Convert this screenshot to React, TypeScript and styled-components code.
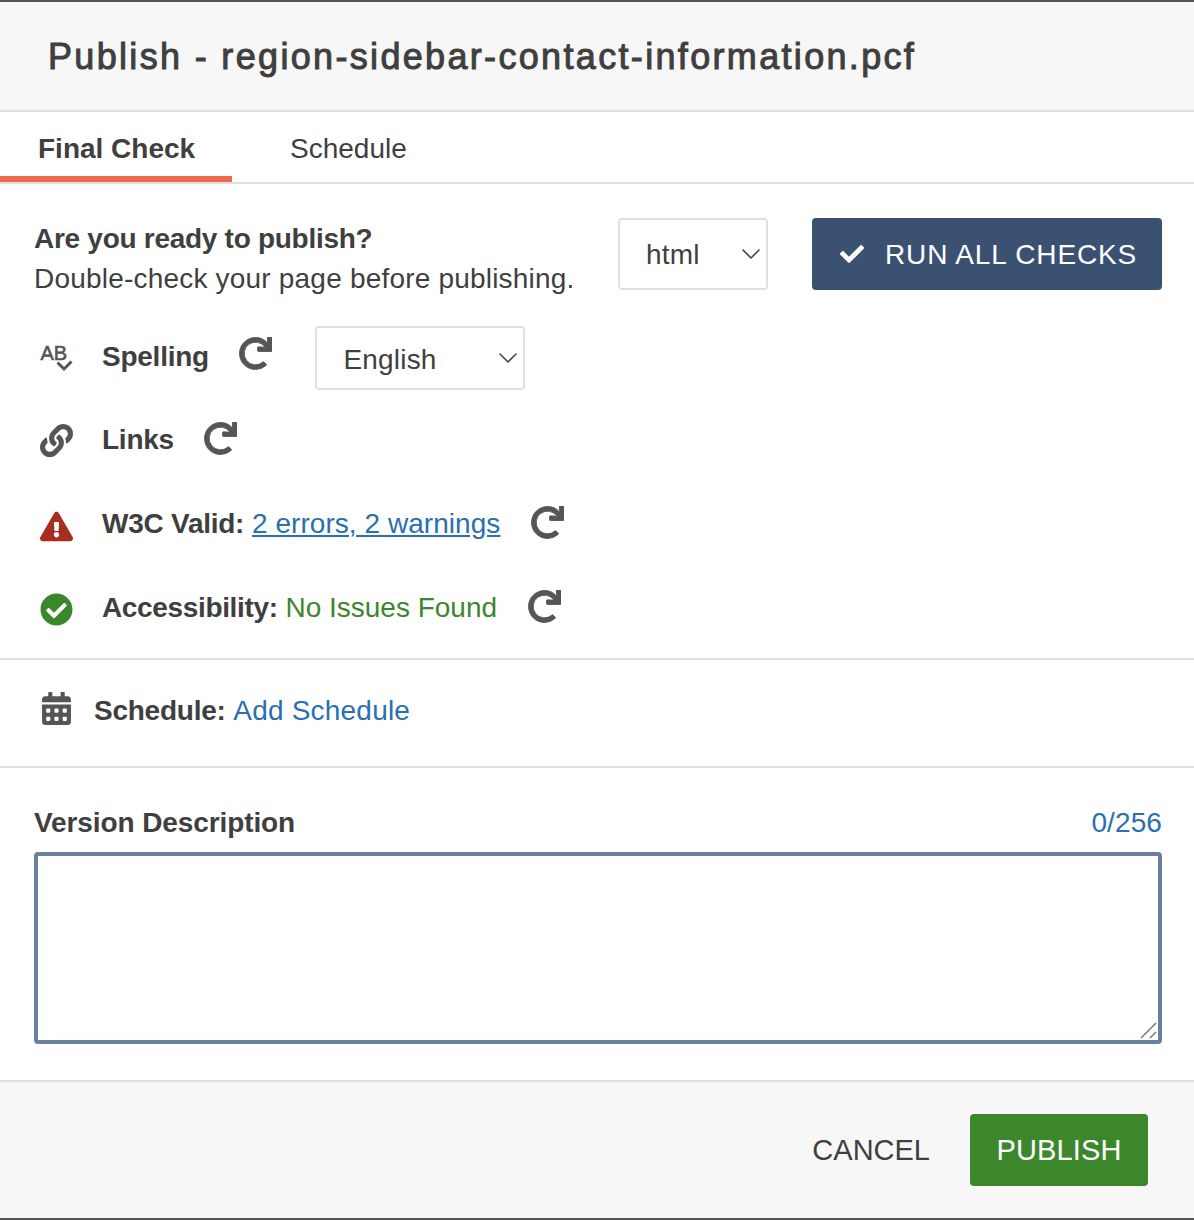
import React, { FC, ReactNode } from 'react'
import styled, { createGlobalStyle } from 'styled-components'
import {
  FaCalendarAlt,
  FaCheck,
  FaCheckCircle,
  FaExclamationTriangle,
  FaLink,
  FaRedo,
} from 'react-icons/fa'
import { LuChevronDown } from 'react-icons/lu'

const GlobalStyle = createGlobalStyle`
  html, body {
    margin: 0;
    padding: 0;
    background: #fff;
  }
  body {
    font-family: 'Liberation Sans', Arial, sans-serif;
    color: #3f3f3f;
  }
`

const Dialog = styled.div`
  width: 1194px;
  height: 1220px;
  box-sizing: border-box;
  border-top: 2px solid #555;
  border-bottom: 2px solid #555;
  display: flex;
  flex-direction: column;
  font-size: 28px;
`

const Header = styled.header`
  height: 110px;
  box-sizing: border-box;
  background: #f7f7f7;
  border-bottom: 2px solid #e0e0e0;
  display: flex;
  align-items: center;
  padding: 2px 48px 0;
`

const Title = styled.h1`
  margin: 0;
  font-size: 36px;
  font-weight: 400;
  letter-spacing: 2.33px;
  -webkit-text-stroke: 1px #3f3f3f;
  white-space: nowrap;
`

const Tabs = styled.nav`
  height: 72px;
  box-sizing: border-box;
  border-bottom: 2px solid #e0e0e0;
  display: flex;
`

const Tab = styled.div<{ $active?: boolean }>`
  height: 70px;
  box-sizing: border-box;
  width: ${(p) => (p.$active ? '232px' : 'auto')};
  padding: 0 ${(p) => (p.$active ? '38px' : '58px')};
  line-height: 74px;
  font-weight: ${(p) => (p.$active ? 700 : 400)};
  border-bottom: ${(p) => (p.$active ? '6px solid #ee6a4a' : 'none')};
  white-space: nowrap;
`

const Checks = styled.section`
  height: 476px;
  box-sizing: border-box;
  padding: 34px 32px 0 34px;
  border-bottom: 2px solid #e0e0e0;
`

const Intro = styled.div`
  display: flex;
  align-items: flex-start;
  height: 72px;
  margin-bottom: 36px;
`

const IntroText = styled.div`
  width: 584px;
  line-height: 40px;
  padding-top: 1px;
  letter-spacing: 0.2px;
`

const Strong = styled.strong<{ $spacing?: number }>`
  font-weight: 700;
  letter-spacing: ${(p) => p.$spacing ?? -0.25}px;
`

const SelectWrap = styled.div<{ $width: number; $height: number }>`
  position: relative;
  width: ${(p) => p.$width}px;
  height: ${(p) => p.$height}px;
  flex: none;
`

const Select = styled.select<{ $drop?: number }>`
  appearance: none;
  width: 100%;
  height: 100%;
  box-sizing: border-box;
  border: 2px solid #e0e0e0;
  border-radius: 4px;
  background: #fff;
  padding: ${(p) => p.$drop ?? 0}px 26px 0;
  font: inherit;
  letter-spacing: 0.2px;
  color: #3f3f3f;
`

const Chevron = styled(LuChevronDown)`
  position: absolute;
  right: 1px;
  top: 50%;
  width: 32px;
  height: 32px;
  margin-top: -16px;
  color: #444;
  stroke-width: 1.2;
  pointer-events: none;
`

const RunButton = styled.button`
  width: 350px;
  height: 72px;
  margin-left: 44px;
  flex: none;
  border: none;
  border-radius: 4px;
  background: #3b5172;
  color: #fff;
  font: inherit;
  letter-spacing: 0.85px;
  display: flex;
  align-items: center;
  padding: 2px 0 0 28px;
  gap: 21px;
  white-space: nowrap;

  svg {
    width: 24px;
    height: 24px;
    margin-top: -2px;
  }
`

const Row = styled.div<{ $height: number }>`
  height: ${(p) => p.$height}px;
  display: flex;
  align-items: center;
  padding-left: 6px;
`

const IconCell = styled.div<{ $color?: string; $shift?: number }>`
  width: 62px;
  flex: none;
  display: flex;
  align-items: center;
  margin-top: ${(p) => p.$shift ?? 0}px;
  color: ${(p) => p.$color || '#555'};
  svg {
    width: 33px;
    height: 33px;
  }
`

const Label = styled.div`
  white-space: nowrap;
`

const SpellLabel = styled(Label)`
  margin-bottom: 3px;
`

const Anchor = styled.a<{ $underline?: boolean }>`
  color: #2a6fb0;
  letter-spacing: ${(p) => (p.$underline ? 0.05 : 0.2)}px;
  text-decoration: ${(p) => (p.$underline ? 'underline' : 'none')};
`

const Passed = styled.span`
  color: #3c872b;
`

const Refresh = styled(FaRedo)<{ $lift?: number }>`
  width: 33px;
  height: 33px;
  margin-left: 30.5px;
  margin-top: ${(p) => p.$lift ?? -4}px;
  color: #555;
  stroke: #555;
  stroke-width: 14;
  flex: none;
`

const LangSelect = styled(SelectWrap)`
  margin-left: 43px;
`

const ScheduleRow = styled.div`
  height: 108px;
  box-sizing: border-box;
  border-bottom: 2px solid #e0e0e0;
  display: flex;
  align-items: center;
  padding: 0 0 4px 40px;

  ${IconCell} {
    width: 54px;
    margin-bottom: 6px;
  }
`

const Version = styled.section`
  flex: 1;
  box-sizing: border-box;
  padding: 35px 32px 0 34px;
`

const VersionHead = styled.div`
  display: flex;
  justify-content: space-between;
  align-items: center;
  height: 40px;
  margin-bottom: 9px;
`

const Counter = styled.span`
  color: #2a6fb0;
  letter-spacing: 0.1px;
`

const DescriptionWrap = styled.div`
  position: relative;
  width: 1128px;
  height: 192px;
`

const Description = styled.textarea`
  display: block;
  width: 100%;
  height: 100%;
  box-sizing: border-box;
  border: 4px solid #6b7f9e;
  border-radius: 4px;
  outline: none;
  resize: none;
  font: inherit;
`

const Grip = styled.svg`
  position: absolute;
  right: 4px;
  bottom: 4px;
  width: 18px;
  height: 18px;
  pointer-events: none;
`

const Footer = styled.footer`
  height: 138px;
  box-sizing: border-box;
  background: #f7f7f7;
  border-top: 2px solid #e0e0e0;
  display: flex;
  align-items: center;
  justify-content: flex-end;
  padding: 0 46px 0 0;
`

const CancelButton = styled.button`
  border: none;
  background: none;
  padding: 0;
  margin-right: 40px;
  font: inherit;
  color: #3f3f3f;
  font-size: 29px;
`

const PublishButton = styled.button`
  width: 178px;
  height: 72px;
  border: none;
  border-radius: 4px;
  background: #3c872b;
  color: #fff;
  font: inherit;
  font-size: 29px;
  letter-spacing: 0.15px;
`

const SpellIconText = styled.text`
  font-family: 'Liberation Sans', Arial, sans-serif;
  font-size: 20px;
  fill: #555;
  stroke: #555;
  stroke-width: 0.6;
`

const SpellIcon: FC = () => (
  <svg viewBox='0 0 33 33' aria-hidden='true'>
    <SpellIconText x='0.5' y='18'>
      AB
    </SpellIconText>
    <polyline points='17.5,20.5 24,27 31.5,19.5' fill='none' stroke='#555' strokeWidth='3' />
  </svg>
)

interface CheckRowProps {
  icon: ReactNode
  color?: string
  shift?: number
  height: number
  children: ReactNode
}

const CheckRow: FC<CheckRowProps> = ({ icon, color, shift, height, children }) => (
  <Row $height={height}>
    <IconCell $color={color} $shift={shift}>
      {icon}
    </IconCell>
    <Label>{children}</Label>
    <Refresh />
  </Row>
)

const App: FC = () => {
  return (
    <Dialog>
      <GlobalStyle />
      <Header>
        <Title>Publish - region-sidebar-contact-information.pcf</Title>
      </Header>
      <Tabs>
        <Tab $active>Final Check</Tab>
        <Tab>Schedule</Tab>
      </Tabs>
      <Checks>
        <Intro>
          <IntroText>
            <Strong $spacing={-0.28}>Are you ready to publish?</Strong>
            <br />
            Double-check your page before publishing.
          </IntroText>
          <SelectWrap $width={150} $height={72}>
            <Select defaultValue='html'>
              <option>html</option>
            </Select>
            <Chevron />
          </SelectWrap>
          <RunButton>
            <FaCheck />
            RUN ALL CHECKS
          </RunButton>
        </Intro>
        <Row $height={64}>
          <IconCell>
            <SpellIcon />
          </IconCell>
          <SpellLabel>
            <Strong>Spelling</Strong>
          </SpellLabel>
          <Refresh $lift={-10} />
          <LangSelect $width={210} $height={64}>
            <Select defaultValue='English' $drop={2}>
              <option>English</option>
            </Select>
            <Chevron />
          </LangSelect>
        </Row>
        <CheckRow icon={<FaLink />} height={100}>
          <Strong>Links</Strong>
        </CheckRow>
        <CheckRow icon={<FaExclamationTriangle />} color='#a82e20' shift={4} height={68}>
          <Strong>W3C Valid:</Strong> <Anchor $underline href='#'>2 errors, 2 warnings</Anchor>
        </CheckRow>
        <CheckRow icon={<FaCheckCircle />} color='#3c872b' shift={2} height={100}>
          <Strong $spacing={-0.35}>Accessibility:</Strong> <Passed>No Issues Found</Passed>
        </CheckRow>
      </Checks>
      <ScheduleRow>
        <IconCell>
          <FaCalendarAlt />
        </IconCell>
        <Label>
          <Strong>Schedule:</Strong> <Anchor href='#'>Add Schedule</Anchor>
        </Label>
      </ScheduleRow>
      <Version>
        <VersionHead>
          <Strong $spacing={-0.1}>Version Description</Strong>
          <Counter>0/256</Counter>
        </VersionHead>
        <DescriptionWrap>
          <Description />
          <Grip viewBox='0 0 18 18' aria-hidden='true'>
            <line x1='1' y1='16' x2='16' y2='1' stroke='#777' strokeWidth='1.5' />
            <line x1='10' y1='16' x2='16' y2='10' stroke='#777' strokeWidth='1.5' />
          </Grip>
        </DescriptionWrap>
      </Version>
      <Footer>
        <CancelButton>CANCEL</CancelButton>
        <PublishButton>PUBLISH</PublishButton>
      </Footer>
    </Dialog>
  )
}

export default App
